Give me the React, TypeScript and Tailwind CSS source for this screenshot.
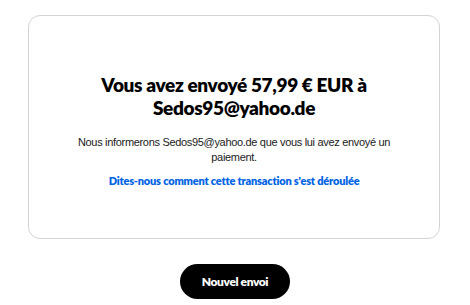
export default function App() {
  return (
    <div className="w-[470px] h-[305px] bg-white overflow-hidden font-['Liberation_Sans',Arial,sans-serif]">
      <div className="ml-[28px] mt-[15px] w-[412px] h-[224px] rounded-[12px] border border-[#d4d4d4] flex flex-col items-center pt-[57px]">
        <h1 className="text-center text-[19px] leading-[23px] font-extrabold text-black tracking-[-0.35px] font-['Lato','Noto_Sans',sans-serif]">
          Vous avez envoyé 57,99 € EUR à<br />Sedos95@yahoo.de
        </h1>
        <p className="mt-[16px] text-center text-[11px] leading-[15px] text-[#1a1a1a] tracking-[-0.32px] w-[320px]">
          Nous informerons Sedos95@yahoo.de que vous lui avez envoyé un paiement.
        </p>
        <a className="mt-[8px] text-[11px] leading-[15px] font-extrabold text-[#0063e5] tracking-[-0.2px] font-['Lato','Noto_Sans',sans-serif]">
          Dites-nous comment cette transaction s'est déroulée
        </a>
      </div>
      <div className="flex justify-center mt-[25px]">
        <button className="w-[110px] h-[35px] rounded-full bg-black text-white text-[12px] font-extrabold tracking-[-0.4px] font-['Lato','Noto_Sans',sans-serif]">
          Nouvel envoi
        </button>
      </div>
    </div>
  );
}
